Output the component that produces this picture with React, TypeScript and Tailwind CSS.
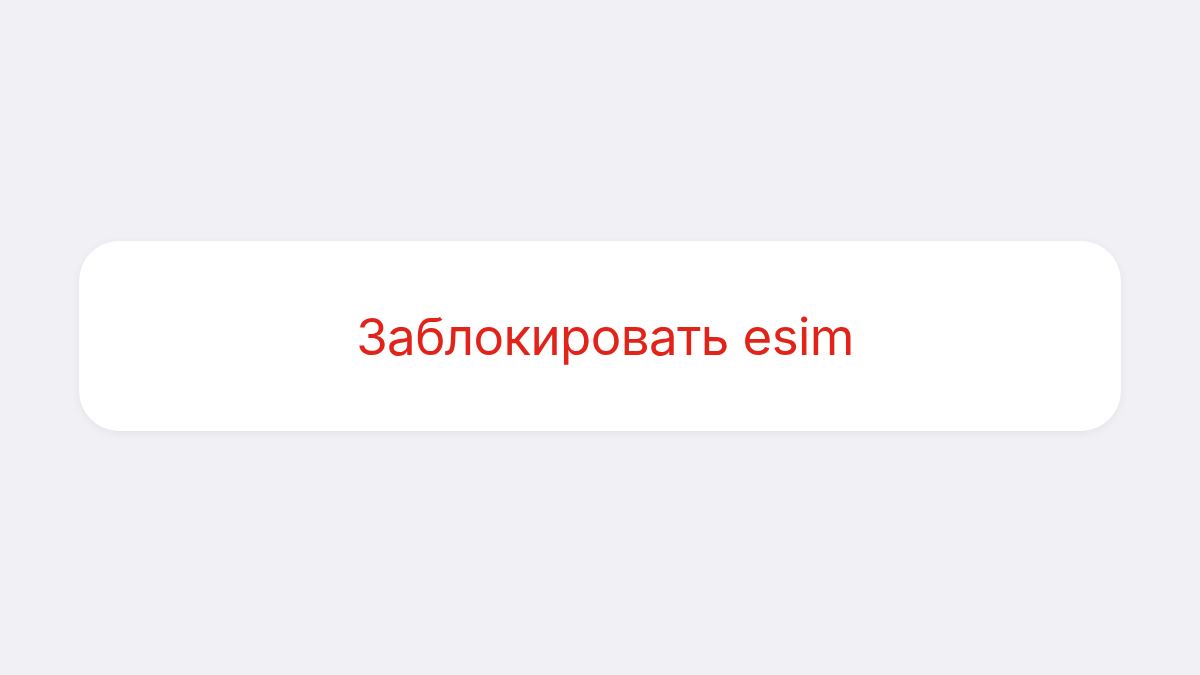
import React from "react";

export default function App() {
  return (
    <div className="h-[675px] w-full bg-[#f0f0f5] px-[79px] pt-[241px]">
      <button
        type="button"
        className="flex h-[190px] w-full items-center justify-center rounded-[40px] bg-white pl-[10px] shadow-[0_2px_10px_rgba(0,0,0,0.06)]"
      >
        <span
          className="text-[51px] leading-none text-[#e2231a] tracking-[-0.6px]"
          style={{ fontFamily: "Inter, 'Noto Sans', sans-serif" }}
        >
          Заблокировать esim
        </span>
      </button>
    </div>
  );
}
